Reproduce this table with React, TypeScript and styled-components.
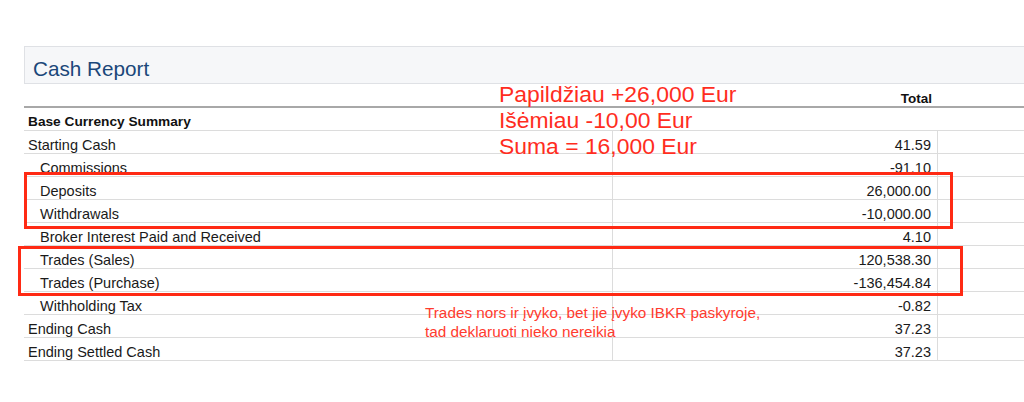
import React from 'react';
import styled, { createGlobalStyle } from 'styled-components';

interface CashRow {
  label: string;
  total: string;
  sub?: boolean;
}

const rows: CashRow[] = [
  { label: 'Starting Cash', total: '41.59' },
  { label: 'Commissions', total: '-91.10', sub: true },
  { label: 'Deposits', total: '26,000.00', sub: true },
  { label: 'Withdrawals', total: '-10,000.00', sub: true },
  { label: 'Broker Interest Paid and Received', total: '4.10', sub: true },
  { label: 'Trades (Sales)', total: '120,538.30', sub: true },
  { label: 'Trades (Purchase)', total: '-136,454.84', sub: true },
  { label: 'Withholding Tax', total: '-0.82', sub: true },
  { label: 'Ending Cash', total: '37.23' },
  { label: 'Ending Settled Cash', total: '37.23' },
];

const App = () => {
  return (
    <Page>
      <GlobalStyle />
      <SectionHeader>
        <Title>Cash Report</Title>
      </SectionHeader>
      <Table>
        <HeadRow>
          <HeadCell />
          <HeadCell align="right">Total</HeadCell>
          <HeadCell />
        </HeadRow>
        <GroupRow>Base Currency Summary</GroupRow>
        {rows.map((row) => (
          <Row key={row.label}>
            <LabelCell sub={row.sub}>{row.label}</LabelCell>
            <NumberCell>{row.total}</NumberCell>
            <EmptyCell />
          </Row>
        ))}
      </Table>

      <Highlight style={{ left: 24, top: 172, width: 929, height: 57 }} />
      <Highlight style={{ left: 18, top: 246, width: 945, height: 50 }} />

      <BigNote>
        Papildžiau +26,000 Eur
        <br />
        Išėmiau -10,00 Eur
        <br />
        Suma = 16,000 Eur
      </BigNote>
      <SmallNote>
        Trades nors ir įvyko, bet jie įvyko IBKR paskyroje,
        <br />
        tad deklaruoti nieko nereikia
      </SmallNote>
    </Page>
  );
};

const GlobalStyle = createGlobalStyle`
body {
  margin: 0;
  background: #ffffff;
  font-family: "Liberation Sans", Arial, sans-serif;
  color: #1a1a1a;
}
`

const Page = styled.div`
position: relative;
width: 1024px;
height: 402px;
overflow: hidden;
padding: 46px 0 0 24px;
box-sizing: border-box;
`

const SectionHeader = styled.div`
width: 1100px;
height: 38px;
box-sizing: border-box;
background: #f6f7f9;
border: solid 1px #dfe1e5;
display: flex;
align-items: center;
padding-left: 8px;
`

const Title = styled.div`
font-size: 20.7px;
color: #1b477a;
padding-top: 7px;
`

const Table = styled.div`
width: 1100px;
display: flex;
flex-direction: column;
`

const HeadRow = styled.div`
display: grid;
grid-template-columns: 589px 325px 1fr;
height: 24px;
box-sizing: border-box;
border-bottom: solid 2px #a8a8a8;
`

const HeadCell = styled.div<{ align?: string }>`
font-size: 13.5px;
font-weight: bold;
text-align: ${(p) => p.align || 'left'};
padding: 7px 6px 0 0;
color: #111;
`

const GroupRow = styled.div`
height: 23px;
box-sizing: border-box;
border-bottom: solid 1px #dcdcdc;
font-size: 13.7px;
font-weight: bold;
padding: 5px 0 0 4px;
line-height: 17px;
color: #111;
`

const Row = styled.div`
display: grid;
grid-template-columns: 589px 325px 1fr;
height: 23px;
box-sizing: border-box;
border-bottom: solid 1px #dcdcdc;
font-size: 14.5px;
line-height: 17px;
`

const LabelCell = styled.div<{ sub?: boolean }>`
padding: 6px 0 0 ${(p) => (p.sub ? '16px' : '4px')};
border-right: solid 1px #dcdcdc;
white-space: nowrap;
`

const NumberCell = styled.div`
padding: 6px 6px 0 0;
text-align: right;
border-right: solid 1px #dcdcdc;
`

const EmptyCell = styled.div`
`

const Highlight = styled.div`
position: absolute;
box-sizing: border-box;
border: solid 3.5px #ff2a14;
`

const BigNote = styled.div`
position: absolute;
left: 499px;
top: 81px;
font-size: 22.9px;
line-height: 26px;
color: #ff2d1e;
white-space: nowrap;
`

const SmallNote = styled.div`
position: absolute;
left: 425px;
top: 303px;
font-size: 15.3px;
line-height: 19px;
color: #ff3b2e;
white-space: nowrap;
`

export default App;
